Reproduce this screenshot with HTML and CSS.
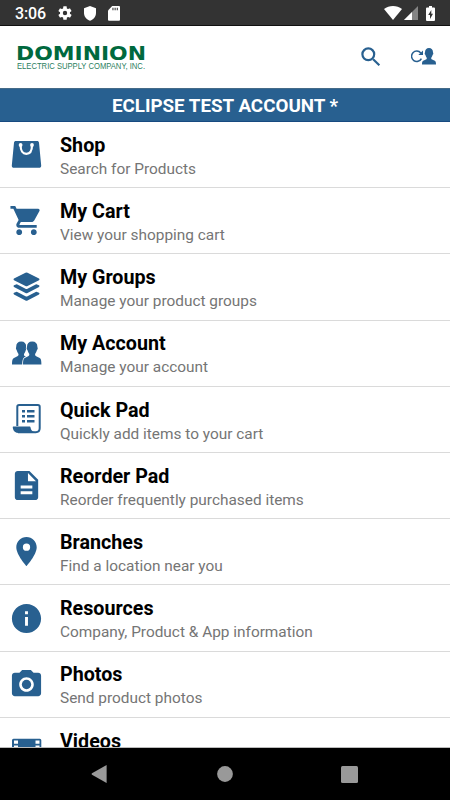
FILE: index.html
```html
<!DOCTYPE html>
<html lang="en">
<head>
    <meta charset="UTF-8">
    <meta name="viewport" content="width=device-width, initial-scale=1.0">
    <title>Dominion Electric Supply</title>
    <link rel="stylesheet" href="styles.css">
</head>
<body>
    <!-- Status Bar -->
    <div class="status-bar">
        <span class="clock">3:06</span>
        <svg class="status-gear" width="16" height="16" viewBox="0 0 24 24"><path d="M19.4 13a7.500 7.500 0 0 0 0-2l2.100-1.700a.5.5 0 0 0 .1-.6l-2-3.400a.5.5 0 0 0-.6-.2l-2.500 1a7 7 0 0 0-1.700-1L14.500 2.400a.5.5 0 0 0-.5-.4h-4a.5.5 0 0 0-.5.4l-.4 2.700a7 7 0 0 0-1.700 1l-2.500-1a.5.5 0 0 0-.6.2l-2 3.400a.5.5 0 0 0 .1.600L4.600 11a7.500 7.500 0 0 0 0 2l-2.200 1.700a.5.5 0 0 0-.1.600l2 3.400c.1.200.4.300.6.200l2.500-1a7 7 0 0 0 1.700 1l.4 2.700c0 .2.200.4.500.4h4c.3 0 .5-.2.500-.4l.4-2.700a7 7 0 0 0 1.700-1l2.500 1c.2.100.5 0 .6-.2l2-3.400a.5.5 0 0 0-.1-.6zM12 15.300a3.300 3.300 0 1 1 0-6.600 3.300 3.300 0 0 1 0 6.600z"/></svg>
        <svg class="status-shield" width="12" height="15" viewBox="0 0 12 15"><path d="M6 0l6 2.300v4.800c0 3.500-2.500 6.600-6 7.700-3.500-1.100-6-4.200-6-7.700V2.300z"/></svg>
        <svg class="status-card" width="12" height="15" viewBox="0 0 12 15"><path d="M4.200 0H11a1 1 0 0 1 1 1v12.700a1 1 0 0 1-1 1H1a1 1 0 0 1-1-1V4.400z"/><path class="card-pins" d="M4.300 1.800h1.300v2.500H4.300zM6.500 1.800h1.300v2.500H6.500zM8.700 1.800H10v2.500H8.700z"/></svg>
        <div class="status-right">
            <svg width="18" height="14" viewBox="0 0 18 14"><path d="M9 14L0 3C5-1 13-1 18 3z"/></svg>
            <svg class="status-signal" width="14" height="14" viewBox="0 0 14 14"><path opacity=".4" d="M14 0v14H0z"/><path d="M8 6v8H0z"/></svg>
            <svg class="status-battery" width="9" height="15" viewBox="0 0 9 15"><path fill-rule="evenodd" d="M3 0h3v1.500h2a1 1 0 0 1 1 1V14a1 1 0 0 1-1 1H1a1 1 0 0 1-1-1V2.500a1 1 0 0 1 1-1h2zM5.300 4L2.200 9H4v4l3-5.200H5.300z"/></svg>
        </div>
    </div>

    <!-- Header -->
    <header class="header">
        <svg class="logo" width="130" height="32" viewBox="0 0 130 32">
            <text class="logo-name" x="-1" y="17" textLength="130" lengthAdjust="spacingAndGlyphs">DOMINION</text>
            <text class="logo-sub" x="0" y="26" textLength="128" lengthAdjust="spacingAndGlyphs">ELECTRIC SUPPLY COMPANY, INC.</text>
        </svg>
        <div class="header-actions">
            <svg width="20" height="20" viewBox="0 0 20 20"><circle cx="7.300" cy="7.300" r="5.900" fill="none" stroke="#286090" stroke-width="2.200"/><path d="M11.400 12.900l1.500-1.500 6.200 6.200-1.500 1.500z"/></svg>
            <svg width="25" height="19" viewBox="0 0 25 19"><path d="M10.400 11.600A5.200 5.200 0 1 1 9.800 6" fill="none" stroke="#286090" stroke-width="1.500"/><path d="M12 3.500v4.600H7.300z"/><path d="M18 1c2.500 0 4 1.700 4 4.200 0 .6.400.7.300 1.500-.1.800-.6.900-.8 1.500-.3 1.200-.9 1.800-1.200 2.500-.2.900 0 1.500.8 1.900l2.700 1.200c.9.500 1.200 1.600 1.200 3.700H11c0-2.100.3-3.200 1.200-3.700l2.700-1.200c.8-.4 1-1 .8-1.900-.3-.7-.9-1.300-1.200-2.500-.2-.6-.7-.7-.8-1.500-.1-.8.3-.9.300-1.500C14 2.700 15.500 1 18 1z"/></svg>
        </div>
    </header>

    <div class="account-bar">ECLIPSE TEST ACCOUNT *</div>

    <!-- Menu -->
    <main class="menu">
        <div class="menu-item">
            <svg class="icon" viewBox="0 0 35 35"><path d="M7 4h21c1.200 0 1.900.6 2 1.700l2.200 22.800c.1 1.400-.8 2.300-2.200 2.300H5c-1.400 0-2.300-.9-2.200-2.300L5 5.700C5.100 4.600 5.800 4 7 4z"/><path d="M11.600 8.200c0 5.800 2.200 8.600 5.700 8.600s5.700-2.800 5.700-8.600" fill="none" stroke="#fff" stroke-width="2.200" stroke-linecap="round"/><circle cx="11.600" cy="8" r="1.900" fill="#fff"/><circle cx="23" cy="8" r="1.900" fill="#fff"/></svg>
            <div class="item-text"><h2>Shop</h2><p>Search for Products</p></div>
        </div>
        <div class="menu-item">
            <svg class="icon" viewBox="0 0 24 24"><path d="M7 18c-1.100 0-1.990.9-1.990 2S5.900 22 7 22s2-.9 2-2-.9-2-2-2zM1 2v2h2l3.600 7.590-1.350 2.450c-.16.280-.25.610-.25.960 0 1.100.9 2 2 2h12v-2H7.420c-.14 0-.25-.11-.25-.25l.03-.12.900-1.630h7.450c.75 0 1.410-.41 1.750-1.030l3.580-6.490A1.003 1.003 0 0 0 20 4H5.210l-.94-2H1zm16 16c-1.100 0-1.990.9-1.990 2s.89 2 1.990 2 2-.9 2-2-.9-2-2-2z"/></svg>
            <div class="item-text"><h2>My Cart</h2><p>View your shopping cart</p></div>
        </div>
        <div class="menu-item">
            <svg class="icon" viewBox="0 0 35 35"><path d="M16.500 2.800q1-.5 2 0l11.500 5.800q1.100.8 0 1.600l-11.500 5.800q-1 .5-2 0L5 10.200q-1.100-.8 0-1.600z"/><path d="M5 15.300l2-.9q.7-.2 1.300.1l8.200 4.200q1 .5 2 0l8.200-4.200q.6-.3 1.300-.1l2 .9q1.100.8 0 1.600l-11.500 6q-1 .5-2 0L5 16.900q-1.100-.8 0-1.600z"/><path d="M5 22.800l2-.9q.7-.2 1.300.1l8.200 4.200q1 .5 2 0l8.200-4.200q.6-.3 1.300-.1l2 .9q1.100.8 0 1.600l-11.500 6q-1 .5-2 0L5 24.400q-1.100-.8 0-1.600z"/></svg>
            <div class="item-text"><h2>My Groups</h2><p>Manage your product groups</p></div>
        </div>
        <div class="menu-item">
            <svg class="icon" viewBox="0 0 35 35"><path d="M12.200 5.500c3.300 0 5 2 5 5.200 0 .9.500 1.100.3 2.100-.2 1-.7 1.100-.9 1.900-.4 1.500-1 2.200-1.500 3.100-.3 1.100-.1 2 .9 2.400l3.800 1.800c1.600.8 2 2.600 2 6.500H3c0-3.900.4-5.700 2-6.500l3.400-1.800c1-.4 1.300-1.300 1-2.400-.5-.9-1.100-1.600-1.500-3.100-.2-.8-.7-.9-.9-1.900-.2-1 .2-1.200.2-2.100 0-3.200 1.700-5.200 5-5.200z"/><path d="M23.200 5.500c3.400 0 5.200 2 5.200 5.200 0 .9.500 1.100.3 2.100-.2 1-.8 1.100-1 1.900-.4 1.500-1 2.200-1.500 3.100-.3 1.100 0 2 1 2.400l3.500 1.700c1.300.8 1.700 2.600 1.700 6.600H14c0-4 .4-5.800 1.700-6.600l3.500-1.700c1-.4 1.300-1.300 1-2.400-.5-.9-1.100-1.600-1.500-3.100-.2-.8-.8-.9-1-1.900-.2-1 .3-1.200.3-2.100 0-3.200 1.800-5.200 5.200-5.200z" stroke="#fff" stroke-width="1.600" paint-order="stroke"/></svg>
            <div class="item-text"><h2>My Account</h2><p>Manage your account</p></div>
        </div>
        <div class="menu-item">
            <svg class="icon" viewBox="0 0 35 35"><path d="M8.300 24V4.800q0-1.800 1.800-1.800h18.800q1.800 0 1.800 1.800v21.500q0 3.900-3.900 3.900H9" fill="none" stroke="#286090" stroke-width="2"/><path d="M4.500 24.500h15.700c1 0 1.300.3 1.400 1.300.2 2 1.700 3.900 4 4.100v1.200H9.700c-3.100 0-5.400-1.900-5.900-5.200-.1-1 .1-1.400.7-1.400z"/><path d="M13 8h3v2.400h-3zM18 8h7.500v2.400H18zM13 13h3v2.400h-3zM18 13h7.500v2.400H18zM13 18h3v2.400h-3zM18 18h7.500v2.400H18z"/></svg>
            <div class="item-text"><h2>Quick Pad</h2><p>Quickly add items to your cart</p></div>
        </div>
        <div class="menu-item">
            <svg class="icon" viewBox="0 0 24 24"><path d="M14 2H6c-1.100 0-1.990.9-1.990 2L4 20c0 1.100.890 2 1.990 2H18c1.100 0 2-.9 2-2V8l-6-6zm2 16H8v-2h8v2zm0-4H8v-2h8v2zm-3-5V3.500L18.500 9H13z"/></svg>
            <div class="item-text"><h2>Reorder Pad</h2><p>Reorder frequently purchased items</p></div>
        </div>
        <div class="menu-item">
            <svg class="icon" viewBox="0 0 24 24"><path d="M12 2C8.130 2 5 5.130 5 9c0 5.250 7 13 7 13s7-7.750 7-13c0-3.870-3.130-7-7-7zm0 9.500a2.500 2.500 0 0 1 0-5 2.500 2.500 0 0 1 0 5z"/></svg>
            <div class="item-text"><h2>Branches</h2><p>Find a location near you</p></div>
        </div>
        <div class="menu-item">
            <svg class="icon" viewBox="0 0 24 24"><path d="M12 2C6.480 2 2 6.480 2 12s4.480 10 10 10 10-4.480 10-10S17.520 2 12 2zm1 15h-2v-6h2v6zm0-8h-2V7h2v2z"/></svg>
            <div class="item-text"><h2>Resources</h2><p>Company, Product &amp; App information</p></div>
        </div>
        <div class="menu-item">
            <svg class="icon" viewBox="0 0 24 24"><circle cx="12" cy="12" r="3.200"/><path d="M9 2L7.170 4H4c-1.100 0-2 .9-2 2v12c0 1.100.9 2 2 2h16c1.100 0 2-.9 2-2V6c0-1.100-.9-2-2-2h-3.170L15 2H9zm3 15c-2.760 0-5-2.240-5-5s2.240-5 5-5 5 2.240 5 5-2.240 5-5 5z"/></svg>
            <div class="item-text"><h2>Photos</h2><p>Send product photos</p></div>
        </div>
        <div class="menu-item">
            <svg class="icon" viewBox="0 0 35 35"><path fill-rule="evenodd" d="M4.500 5.700h26.300q1.500 0 1.500 1.500v22q0 1.500-1.500 1.500H4.500Q3 30.700 3 29.200v-22q0-1.500 1.500-1.500zM5 7.500v3.200h4V7.500zm0 5v3.500h4v-3.500zm0 6v3.500h4v-3.500zm0 6v3.500h4v-3.500zM26.500 7.500v3.200h4V7.500zm0 5v3.500h4v-3.500zm0 6v3.500h4v-3.500zm0 6v3.500h4v-3.500z"/></svg>
            <div class="item-text"><h2>Videos</h2></div>
        </div>
    </main>

    <!-- Navigation Bar -->
    <nav class="nav-bar">
        <svg width="18" height="18" viewBox="0 0 18 18"><path d="M15.600 0v18L1 9.800Q0 9 1 8.200z"/></svg>
        <svg width="16" height="16" viewBox="0 0 16 16"><circle cx="8" cy="8" r="7.900"/></svg>
        <svg width="17" height="17" viewBox="0 0 17 17"><rect width="17" height="17" rx="1.500"/></svg>
    </nav>
</body>
</html>
```
FILE: styles.css
```css
/* Global Styles */
* {
    margin: 0;
    padding: 0;
    box-sizing: border-box;
}

body {
    font-family: Roboto, sans-serif;
    background-color: #fff;
    width: 450px;
    height: 800px;
    display: flex;
    flex-direction: column;
    overflow: hidden;
}

svg {
    display: block;
    flex-shrink: 0;
}

/* Status Bar */
.status-bar {
    height: 26px;
    flex-shrink: 0;
    display: flex;
    align-items: center;
    padding: 1px 15px 0;
    background-color: #333;
    border-bottom: 1px solid #111;
    color: #fff;
    fill: #fff;
}

.clock {
    width: 42px;
    font-size: 16px;
    font-weight: 500;
    line-height: 24px;
    letter-spacing: -0.1px;
    padding-top: 2px;
}

.status-shield {
    margin-left: 11px;
}

.status-card {
    margin-left: 12px;
}

.card-pins {
    fill: #555;
}

.status-right {
    display: flex;
    align-items: center;
    margin-left: auto;
}

.status-signal {
    margin-left: 2px;
}

.status-battery {
    margin-left: 8px;
}

/* Header */
.header {
    height: 62px;
    flex-shrink: 0;
    display: flex;
    align-items: center;
    justify-content: space-between;
    padding: 0 14px 1px 17px;
    fill: #286090;
}

.logo {
    fill: #00693e;
    margin-top: 4px;
    overflow: visible;
}

.logo-name {
    font-family: "DejaVu Sans", sans-serif;
    font-size: 18.6px;
    font-weight: bold;
}

.logo-sub {
    font-family: "Liberation Sans", Arial, sans-serif;
    font-size: 8.2px;
    fill: #2c8060;
}

.header-actions {
    display: flex;
    align-items: center;
    gap: 30px;
}

.account-bar {
    height: 34px;
    flex-shrink: 0;
    background-color: #286090;
    border-top: 1px solid #456b88;
    border-bottom: 1px solid #174a80;
    color: #fff;
    font-size: 18.800px;
    font-weight: bold;
    line-height: 34px;
    text-align: center;
}

/* Menu */
.menu {
    flex: 1;
    min-height: 0;
    overflow: hidden;
    border-bottom: 1px solid #bbb;
}

.menu-item {
    height: 66.2px;
    display: flex;
    align-items: flex-start;
    padding: 15.300px 0 0 8.500px;
    border-bottom: 1px solid #dadada;
}

.icon {
    width: 35px;
    height: 35px;
    fill: #286090;
}

.item-text {
    margin: -3.400px 0 0 16.500px;
}

.item-text h2 {
    font-size: 19.700px;
    font-weight: bold;
    line-height: 24px;
    color: #000;
}

.item-text p {
    font-size: 15.400px;
    line-height: 23px;
    color: #757575;
}

/* Navigation Bar */
.nav-bar {
    height: 52px;
    flex-shrink: 0;
    display: flex;
    align-items: center;
    justify-content: space-between;
    padding: 0 92px 0 91px;
    background-color: #000;
    fill: #999;
}
```
